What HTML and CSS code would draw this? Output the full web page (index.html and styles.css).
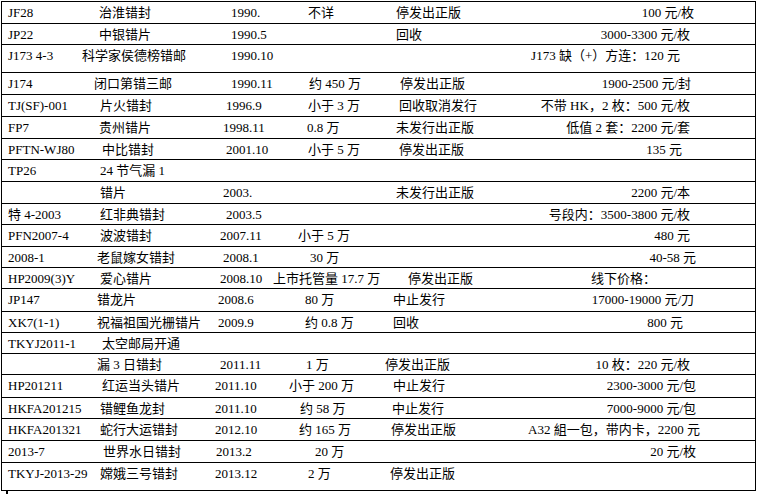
FILE: index.html
```html
<!DOCTYPE html>
<html lang="zh">
<head>
<meta charset="utf-8">
<title>错票表</title>
<link rel="stylesheet" href="styles.css">
</head>
<body>
<div class="sheet">
  <div class="row h22"><span class="c" style="width:91px">JF28</span><span class="c" style="width:132px">治淮错封</span><span class="c" style="width:77px">1990.</span><span class="c" style="width:88px">不详</span><span class="c">停发出正版</span><span class="price" style="margin-right:61px">100 元/枚</span></div>
  <div class="row h21"><span class="c" style="width:91px">JP22</span><span class="c" style="width:132px">中银错片</span><span class="c" style="width:165px">1990.5</span><span class="c">回收</span><span class="price" style="margin-right:65px">3000-3300 元/枚</span></div>
  <div class="row h28"><span class="c" style="width:74px">J173 4-3</span><span class="c" style="width:149px">科学家侯德榜错邮</span><span class="c">1990.10</span><span class="price" style="margin-right:75px">J173 缺（+）方连：120 元</span></div>
  <div class="row h22"><span class="c" style="width:86px">J174</span><span class="c" style="width:137px">闭口第错三邮</span><span class="c" style="width:78px">1990.11</span><span class="c" style="width:91px">约 450 万</span><span class="c">停发出正版</span><span class="price" style="margin-right:64px">1900-2500 元/封</span></div>
  <div class="row h22"><span class="c" style="width:92px">TJ(SF)-001</span><span class="c" style="width:126px">片火错封</span><span class="c" style="width:82px">1996.9</span><span class="c" style="width:91px">小于 3 万</span><span class="c">回收取消发行</span><span class="price" style="margin-right:65px">不带 HK，2 枚：500 元/枚</span></div>
  <div class="row h22"><span class="c" style="width:91px">FP7</span><span class="c" style="width:124px">贵州错片</span><span class="c" style="width:84px">1998.11</span><span class="c" style="width:89px">0.8 万</span><span class="c">未发行出正版</span><span class="price" style="margin-right:65px">低值 2 套：2200 元/套</span></div>
  <div class="row h21"><span class="c" style="width:94px">PFTN-WJ80</span><span class="c" style="width:124px">中比错封</span><span class="c" style="width:82px">2001.10</span><span class="c" style="width:91px">小于 5 万</span><span class="c">停发出正版</span><span class="price" style="margin-right:73px">135 元</span></div>
  <div class="row h22"><span class="c" style="width:92px">TP26</span><span class="c">24 节气漏 1</span></div>
  <div class="row h22"><span class="c" style="width:92px"></span><span class="c" style="width:123px">错片</span><span class="c" style="width:173px">2003.</span><span class="c">未发行出正版</span><span class="price" style="margin-right:65px">2200 元/本</span></div>
  <div class="row h21"><span class="c" style="width:92px">特 4-2003</span><span class="c" style="width:126px">红非典错封</span><span class="c">2003.5</span><span class="price" style="margin-right:65px">号段内：3500-3800 元/枚</span></div>
  <div class="row h22"><span class="c" style="width:92px">PFN2007-4</span><span class="c" style="width:120px">波波错封</span><span class="c" style="width:78px">2007.11</span><span class="c">小于 5 万</span><span class="price" style="margin-right:65px">480 元</span></div>
  <div class="row h21"><span class="c" style="width:89px">2008-1</span><span class="c" style="width:126px">老鼠嫁女错封</span><span class="c" style="width:87px">2008.1</span><span class="c">30 万</span><span class="price" style="margin-right:59px">40-58 元</span></div>
  <div class="row h21"><span class="c" style="width:92px">HP2009(3)Y</span><span class="c" style="width:120px">爱心错片</span><span class="c" style="width:53px">2008.10</span><span class="c" style="width:135px">上市托管量 17.7 万</span><span class="c" style="width:183px">停发出正版</span><span class="c">线下价格：</span></div>
  <div class="row h23"><span class="c" style="width:89px">JP147</span><span class="c" style="width:121px">错龙片</span><span class="c" style="width:87px">2008.6</span><span class="c" style="width:88px">80 万</span><span class="c">中止发行</span><span class="price" style="margin-right:61px">17000-19000 元/刀</span></div>
  <div class="row h21"><span class="c" style="width:89px">XK7(1-1)</span><span class="c" style="width:121px">祝福祖国光栅错片</span><span class="c" style="width:87px">2009.9</span><span class="c" style="width:88px">约 0.8 万</span><span class="c">回收</span><span class="price" style="margin-right:72px">800 元</span></div>
  <div class="row h21"><span class="c" style="width:94px">TKYJ2011-1</span><span class="c">太空邮局开通</span></div>
  <div class="row h21"><span class="c" style="width:89px"></span><span class="c" style="width:123px">漏 3 日错封</span><span class="c" style="width:86px">2011.11</span><span class="c" style="width:79px">1 万</span><span class="c">停发出正版</span><span class="price" style="margin-right:65px">10 枚：220 元/枚</span></div>
  <div class="row h23"><span class="c" style="width:94px">HP201211</span><span class="c" style="width:113px">红运当头错片</span><span class="c" style="width:74px">2011.10</span><span class="c" style="width:104px">小于 200 万</span><span class="c">中止发行</span><span class="price" style="margin-right:59px">2300-3000 元/包</span></div>
  <div class="row h21"><span class="c" style="width:92px">HKFA201215</span><span class="c" style="width:115px">错鲤鱼龙封</span><span class="c" style="width:85px">2011.10</span><span class="c" style="width:92px">约 58 万</span><span class="c">中止发行</span><span class="price" style="margin-right:59px">7000-9000 元/包</span></div>
  <div class="row h22"><span class="c" style="width:92px">HKFA201321</span><span class="c" style="width:115px">蛇行大运错封</span><span class="c" style="width:84px">2012.10</span><span class="c" style="width:92px">约 165 万</span><span class="c">停发出正版</span><span class="price" style="margin-right:55px">A32 組一包，带内卡，2200 元</span></div>
  <div class="row h22"><span class="c" style="width:95px">2013-7</span><span class="c" style="width:113px">世界水日错封</span><span class="c" style="width:99px">2013.2</span><span class="c">20 万</span><span class="price" style="margin-right:59px">20 元/枚</span></div>
  <div class="row h28"><span class="c" style="width:92px">TKYJ-2013-29</span><span class="c" style="width:115px">嫦娥三号错封</span><span class="c" style="width:93px">2013.12</span><span class="c" style="width:82px">2 万</span><span class="c">停发出正版</span></div>
</div>
<div class="tail"><span class="mark"></span></div>
</body>
</html>
```

FILE: styles.css
```css
html, body {
  margin: 0;
  padding: 0;
  background: #fff;
}
body {
  width: 757px;
  height: 494px;
  overflow: hidden;
  font-family: "Liberation Serif", "Noto Sans CJK SC", serif;
  font-size: 13px;
  color: #000;
}
.sheet {
  box-sizing: border-box;
  width: 755px;
  margin: 1px 0 0 1px;
  border-top: 1px solid #000;
  border-left: 1px solid #000;
  border-right: 1px solid #000;
}
.row {
  box-sizing: border-box;
  display: flex;
  align-items: flex-start;
  padding-left: 6px;
  border-bottom: 1px solid #000;
  line-height: 21px;
  white-space: nowrap;
}
.h21 { height: 21px; }
.h22 { height: 22px; }
.h23 { height: 23px; }
.h28 { height: 28px; }
.c {
  flex: none;
  display: block;
}
.price {
  flex: none;
  margin-left: auto;
}
.tail {
  height: 3px;
  padding-left: 6px;
}
.mark {
  display: block;
  width: 2px;
  height: 3px;
  background: #000;
}
```
